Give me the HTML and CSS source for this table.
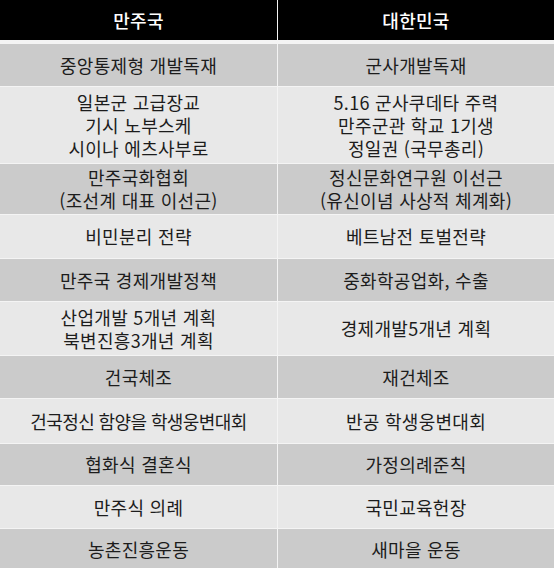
FILE: index.html
```html
<!DOCTYPE html>
<html lang="ko">
<head>
<meta charset="utf-8">
<link rel="stylesheet" href="styles.css">
</head>
<body>
<div class="table">
  <div class="cell head">만주국</div>
  <div class="cell head">대한민국</div>

  <div class="cell dark r1">중앙통제형 개발독재</div>
  <div class="cell dark r1">군사개발독재</div>

  <div class="cell light r2">일본군 고급장교<br>기시 노부스케<br>시이나 에츠사부로</div>
  <div class="cell light r2">5.16 군사쿠데타 주력<br>만주군관 학교 1기생<br>정일권 (국무총리)</div>

  <div class="cell dark r3">만주국화협회<br>(조선계 대표 이선근)</div>
  <div class="cell dark r3">정신문화연구원 이선근<br>(유신이념 사상적 체계화)</div>

  <div class="cell light r4">비민분리 전략</div>
  <div class="cell light r4">베트남전 토벌전략</div>

  <div class="cell dark r5">만주국 경제개발정책</div>
  <div class="cell dark r5">중화학공업화, 수출</div>

  <div class="cell light r6">산업개발 5개년 계획<br>북변진흥3개년 계획</div>
  <div class="cell light r6">경제개발5개년 계획</div>

  <div class="cell dark r7">건국체조</div>
  <div class="cell dark r7">재건체조</div>

  <div class="cell light r8 tight">건국정신 함양을 학생웅변대회</div>
  <div class="cell light r8">반공 학생웅변대회</div>

  <div class="cell dark r9">협화식 결혼식</div>
  <div class="cell dark r9">가정의례준칙</div>

  <div class="cell light r10">만주식 의례</div>
  <div class="cell light r10">국민교육헌장</div>

  <div class="cell dark r11">농촌진흥운동</div>
  <div class="cell dark r11">새마을 운동</div>
</div>
</body>
</html>
```

FILE: styles.css
```css
html, body {
  margin: 0;
  padding: 0;
  background: #ffffff;
}

body {
  width: 554px;
  height: 568px;
  overflow: hidden;
  font-family: "Noto Sans CJK KR", "Noto Sans", sans-serif;
}

.table {
  display: grid;
  grid-template-columns: 277px 276px;
  column-gap: 1px;
  row-gap: 1px;
  background: #f4f4f4;
}

.cell {
  display: flex;
  align-items: center;
  justify-content: center;
  text-align: center;
  font-size: 18px;
  line-height: 23px;
  color: #1c1c1c;
  letter-spacing: 0.3px;
  white-space: nowrap;
}

.tight {
  letter-spacing: -0.6px;
}

.head {
  height: 40px;
  margin-bottom: 3px;
  background: #000000;
  color: #ffffff;
  font-weight: 500;
  font-size: 18px;
}

.dark { background: #cbcbcb; }
.light { background: #e8e8e8; }

.r1 { height: 42px; }
.r2 { height: 76px; }
.r3 { height: 50px; }
.r4 { height: 43px; }
.r5 { height: 42px; }
.r6 { height: 53px; }
.r7 { height: 42px; }
.r8 { height: 44px; }
.r9 { height: 41px; }
.r10 { height: 42px; }
.r11 { height: 40px; }
```
